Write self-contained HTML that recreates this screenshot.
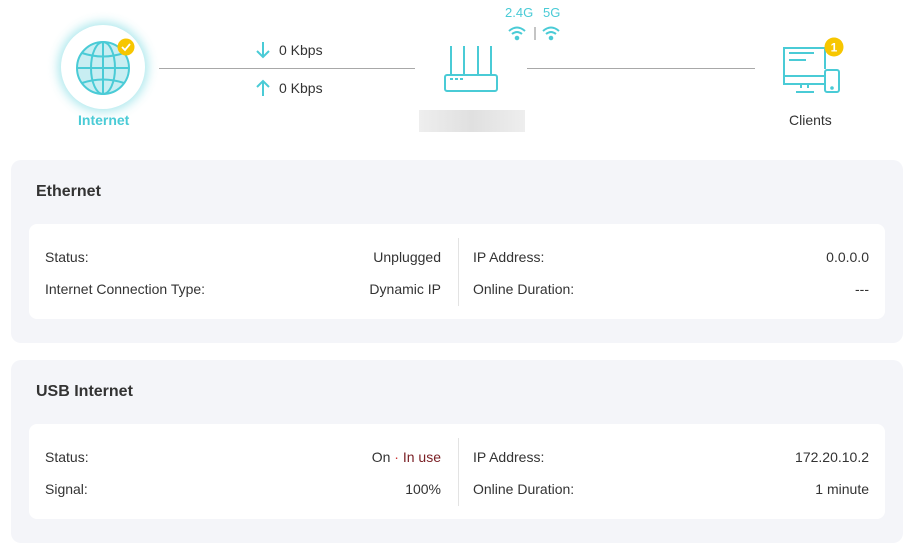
<!DOCTYPE html>
<html><head><meta charset="utf-8"><style>
*{margin:0;padding:0;box-sizing:border-box}
body{width:908px;height:550px;background:#fff;font-family:"Liberation Sans",Arial,sans-serif;color:#333;position:relative;overflow:hidden;font-size:14px}
.abs{position:absolute}
.line{position:absolute;height:1px;background:#a8a8a8;top:68px}
.card{position:absolute;left:11px;width:892px;height:183px;background:#f4f5f9;border-radius:10px}
.card h2{position:absolute;left:25px;top:23px;font-size:16px;font-weight:bold;color:#333}
.inner{position:absolute;left:18px;top:64px;width:856px;height:95px;background:#fff;border-radius:8px}
.row{position:absolute;font-size:14px;color:#333}
.vd{position:absolute;left:429px;top:14px;width:1px;height:68px;background:#e3e3e3}
</style></head><body>
<!-- internet -->
<div class="abs" style="left:61px;top:25px;width:84px;height:84px;border-radius:50%;background:#fff;box-shadow:0 0 10px 3px rgba(74,203,214,0.45)"></div>
<svg class="abs" style="left:73px;top:38px" width="60" height="60" viewBox="0 0 60 60" fill="none" stroke="#4acbd6" stroke-width="2">
<circle cx="30" cy="30" r="26" fill="#c8eef2"/>
<ellipse cx="30" cy="30" rx="12" ry="26"/>
<line x1="30" y1="4" x2="30" y2="56"/>
<line x1="4" y1="30" x2="56" y2="30"/>
<path d="M9 15 Q30 22 51 15"/><path d="M9 45 Q30 38 51 45"/>
</svg>
<svg class="abs" style="left:117px;top:38px" width="18" height="18" viewBox="0 0 18 18"><circle cx="9" cy="9" r="8.5" fill="#f7c600"/><path d="M5 9l3 3 5-6" stroke="#fff" stroke-width="1.8" fill="none"/></svg>
<div class="abs" style="left:78px;top:112px;font-size:14px;font-weight:bold;color:#4acbd6">Internet</div>
<div class="line" style="left:159px;width:256px"></div>
<svg class="abs" style="left:256px;top:41px" width="14" height="18" viewBox="0 0 14 18" stroke="#4acbd6" stroke-width="2" fill="none"><path d="M7 1v15M1 10l6 6 6-6"/></svg>
<div class="abs" style="left:279px;top:42px">0 Kbps</div>
<svg class="abs" style="left:256px;top:79px" width="14" height="18" viewBox="0 0 14 18" stroke="#4acbd6" stroke-width="2" fill="none"><path d="M7 17V2M1 8l6-6 6 6"/></svg>
<div class="abs" style="left:279px;top:80px">0 Kbps</div>
<!-- router -->
<div class="abs" style="left:505px;top:5px;font-size:13px;color:#4acbd6">2.4G</div>
<div class="abs" style="left:543px;top:5px;font-size:13px;color:#4acbd6">5G</div>
<svg class="abs" style="left:507px;top:24px" width="55" height="17" viewBox="0 0 55 17" fill="none" stroke="#4acbd6" stroke-width="2">
<path d="M2 7 Q10 0 18 7M5 10 Q10 6 15 10"/><circle cx="10" cy="14" r="1.3" fill="#4acbd6"/>
<line x1="28" y1="3" x2="28" y2="16" stroke="#888" stroke-width="1"/>
<path d="M36 7 Q44 0 52 7M39 10 Q44 6 49 10"/><circle cx="44" cy="14" r="1.3" fill="#4acbd6"/>
</svg>
<svg class="abs" style="left:443px;top:44px" width="56" height="50" viewBox="0 0 56 50" fill="none" stroke="#4acbd6" stroke-width="2">
<path d="M8 2v29M21 2v29M35 2v29M48 2v29"/><rect x="2" y="31" width="52" height="16" rx="2"/>
<path d="M7 35h3M12 35h3M17 35h3"/>
</svg>
<div class="abs" style="left:419px;top:110px;width:106px;height:22px;background:linear-gradient(90deg,#eee,#e0e0e0 50%,#eee)"></div>
<div class="line" style="left:527px;width:228px"></div>
<!-- clients -->
<svg class="abs" style="left:781px;top:44px" width="60" height="50" viewBox="0 0 60 50" fill="none" stroke="#4acbd6" stroke-width="2">
<path d="M44 25V4H3v36h41"/><path d="M3 32h41"/><path d="M8 9h25M8 16h17"/><path d="M20 40v4M27 40v4M15 48h18"/>
<rect x="44" y="26" width="14" height="22" rx="2"/><circle cx="51" cy="44" r="0.8" fill="#4acbd6"/>
</svg>
<svg class="abs" style="left:824px;top:37px" width="20" height="20" viewBox="0 0 20 20"><circle cx="10" cy="10" r="9.5" fill="#f7c600"/><text x="10" y="14.5" text-anchor="middle" font-family="Liberation Sans" font-size="12" font-weight="bold" fill="#fff">1</text></svg>
<div class="abs" style="left:789px;top:112px;font-size:14px">Clients</div>
<!-- cards -->
<div class="card" style="top:160px"><h2>Ethernet</h2>
<div class="inner">
<div class="row" style="left:16px;top:25px">Status:</div>
<div class="row" style="right:444px;top:25px">Unplugged</div>
<div class="row" style="left:16px;top:57px">Internet Connection Type:</div>
<div class="row" style="right:444px;top:57px">Dynamic IP</div>
<div class="vd"></div>
<div class="row" style="left:444px;top:25px">IP Address:</div>
<div class="row" style="right:16px;top:25px">0.0.0.0</div>
<div class="row" style="left:444px;top:57px">Online Duration:</div>
<div class="row" style="right:16px;top:57px">---</div>
</div></div>
<div class="card" style="top:360px"><h2>USB Internet</h2>
<div class="inner">
<div class="row" style="left:16px;top:25px">Status:</div>
<div class="row" style="right:444px;top:25px">On <span style="color:#c33">·</span> <span style="color:#7a1f24">In use</span></div>
<div class="row" style="left:16px;top:57px">Signal:</div>
<div class="row" style="right:444px;top:57px">100%</div>
<div class="vd"></div>
<div class="row" style="left:444px;top:25px">IP Address:</div>
<div class="row" style="right:16px;top:25px">172.20.10.2</div>
<div class="row" style="left:444px;top:57px">Online Duration:</div>
<div class="row" style="right:16px;top:57px">1 minute</div>
</div></div>
</body></html>
